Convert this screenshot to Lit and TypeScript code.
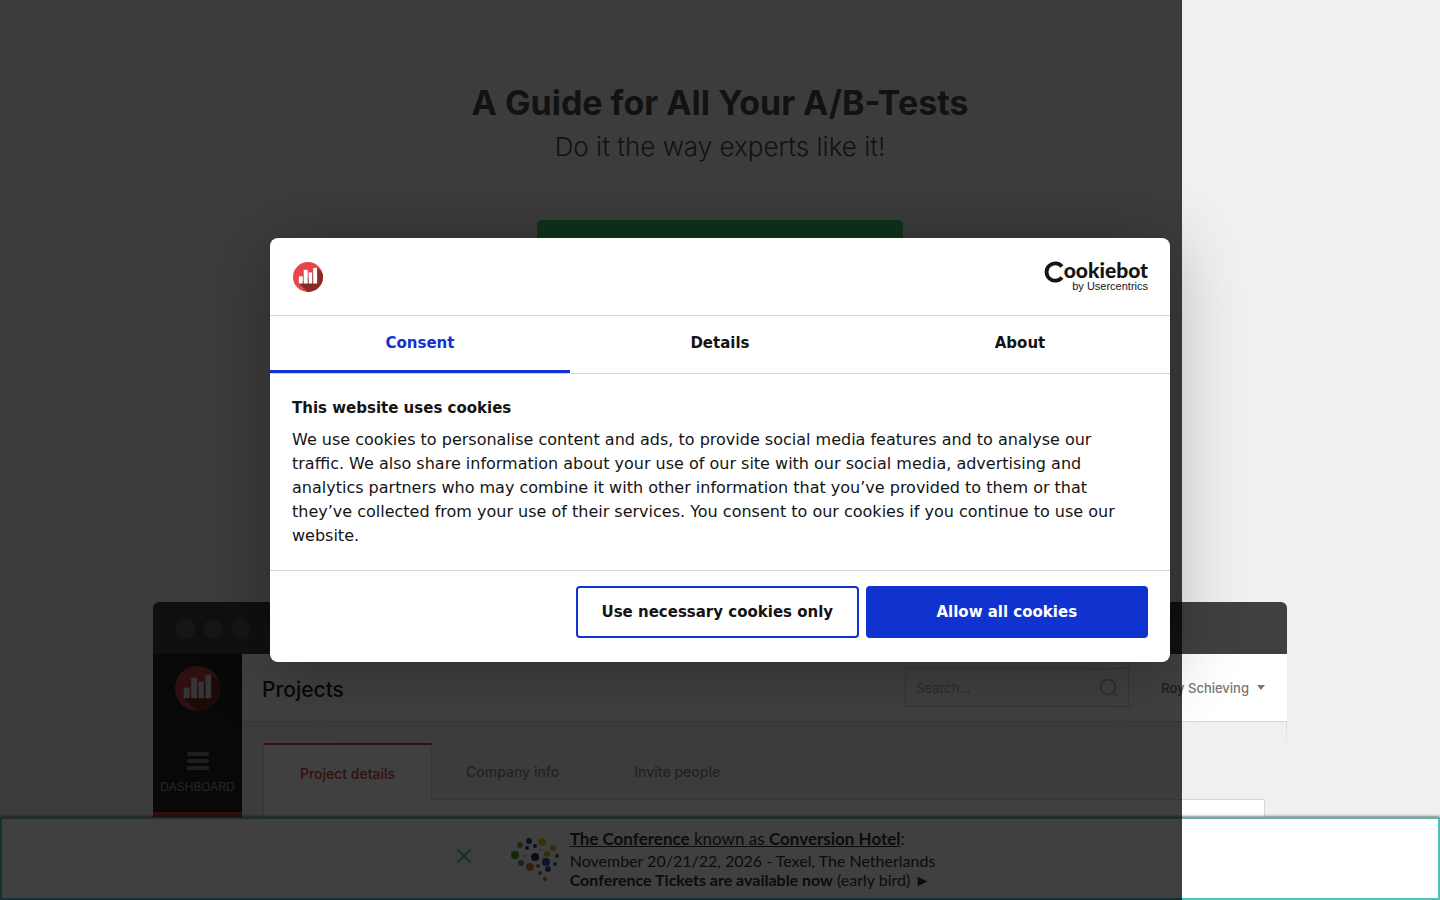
import { LitElement, html, css, svg } from "lit";
import { customElement, state } from "lit/decorators.js";

const barsLogo = (id: string) => html`
  <svg class="bars" viewBox="0 0 46 46" aria-hidden="true">
    <defs><clipPath id=${id}><circle cx="23" cy="23" r="23" /></clipPath></defs>
    <circle cx="23" cy="23" r="23" fill="#e8454a" />
    <path clip-path="url(#${id})" d="M9 33 L22 46 H46 V18 L38 9 L20 28 Z" fill="#8a2a24" />
    <g fill="#fff">
      <rect x="9" y="22" width="6" height="11" />
      <rect x="16.500" y="12" width="6" height="21" />
      <rect x="24" y="16" width="5.500" height="17" />
      <rect x="31" y="9" width="6" height="24" />
    </g>
  </svg>
`;

const DOTS: [number, number, number, string][] = [
  [5, 25, 4, "#4e9a2e"], [10, 15, 3, "#6ab04a"], [19, 11, 3, "#3c3c78"], [32, 12, 4, "#e6c21e"],
  [17, 18, 2, "#2f3270"], [25, 16, 2, "#2f3270"], [30, 20, 1, "#d8b060"], [43, 18, 3, "#dba53a"],
  [15, 26, 1, "#5a9a4a"], [25, 27, 4, "#26265c"], [37, 24, 3, "#dfb42a"], [47, 26, 2, "#4a3c80"],
  [11, 33, 3, "#5aa046"], [20, 37, 4, "#e0762a"], [28, 36, 2, "#6a6ab0"], [36, 32, 4, "#2f50a0"],
  [45, 34, 2, "#4c5aa0"], [38, 39, 3, "#34509a"], [30, 43, 2, "#c0653a"], [35, 49, 2, "#c8653a"],
];

@customElement("app-root")
export class AppRoot extends LitElement {
  @state() private tab = "Consent";

  static styles = css`
    :host {
      display: block;
      position: relative;
      height: 100vh;
      overflow: hidden;
      background: #f0f0f0;
      color: #333;
      font-family: Inter, sans-serif;
    }
    * { box-sizing: border-box; }
    h1, h2, p { margin: 0; }
    button { font: inherit; cursor: pointer; }
    a { color: inherit; }
    svg { display: block; }

    .hero { display: flex; flex-direction: column; align-items: center; padding-top: 82px; text-align: center; }
    .hero h1 { font-size: 34px; line-height: 42px; font-weight: 700; color: #4a4a4a; }
    .hero p { margin-top: 6px; font-size: 26px; line-height: 34px; font-weight: 300; color: #4a4a4a; }
    .cta {
      width: 366px; height: 64px; margin-top: 56px; border: 0; border-radius: 5px;
      background: #3cc864; color: #fff; font-size: 20px; font-weight: 700;
    }

    .app { width: 79%; max-width: 1134px; margin: 318px auto 0; }
    .chrome {
      display: flex; align-items: center; gap: 8px; height: 52px; padding: 2px 0 0 22px;
      background: #3f403f; border-radius: 6px 6px 0 0;
    }
    .chrome i { width: 20px; height: 20px; border-radius: 50%; background: #575757; }
    .window { display: flex; height: 400px; }
    .side {
      display: flex; flex-direction: column; align-items: center; width: 89px; height: 163px;
      padding-top: 12px; background: #232323; border-bottom: 5px solid #c83836;
      color: #959595; font-size: 12px; line-height: 16px;
    }
    .side .bars { width: 45px; height: 45px; opacity: .8; }
    .burger { display: grid; gap: 3px; width: 22px; margin: 41px 0 9px; }
    .burger i { height: 4px; border-radius: 1px; background: #777; }
    .work { flex: 1; }
    .top {
      display: flex; align-items: center; height: 68px; padding: 0 22px 0 20px;
      background: #fff; border-bottom: 1px solid #d8d8d8;
    }
    .top h2 { flex: 1; padding-top: 4px; font-size: 21px; line-height: 28px; font-weight: 500; color: #222; }
    .search {
      display: flex; align-items: center; width: 224px; height: 39px; padding: 0 10px;
      border: 1px solid #d4d4d4;
    }
    .search input {
      flex: 1; min-width: 0; padding: 0; border: 0; background: none; font: inherit; font-size: 13px;
    }
    .search input::placeholder { color: #b0b0b0; }
    .user {
      display: flex; align-items: center; gap: 8px; margin-left: 32px; padding: 0; border: 0;
      background: none; color: #777; font-size: 13px; font-weight: 500;
    }
    .tabs {
      display: flex; padding: 21px 22px 0 21px;
      background: linear-gradient(#d8d8d8, #f0f0f0) right top / 1px 26px no-repeat;
    }
    .tabs a {
      height: 57px; padding-right: 75px; border-bottom: 1px solid #d8d8d8;
      color: #888; font-size: 14px; line-height: 58px; font-weight: 500; text-decoration: none;
    }
    .tabs .on {
      width: 169px; padding: 0; border: solid #d8d8d8; border-width: 2px 1px 0;
      border-top-color: #e03c38; background: #fff; color: #d23c38; text-align: center;
    }
    .tabs .on + a { padding-left: 34px; }
    .tabs .rest { flex: 1; border-bottom: 1px solid #d8d8d8; }
    .panel { height: 120px; margin: 0 22px 0 21px; background: #fff; border: solid #d8d8d8; border-width: 0 1px; }

    .promo {
      position: absolute; left: 0; right: 0; bottom: 0; height: 83px;
      display: flex; align-items: center; justify-content: center;
      padding: 0 50px 2px 0; background: #fff; border: 2px solid #4bc2ba; border-top-color: #62b3af;
      box-shadow: 0 0 3px rgba(0, 0, 0, .8); font-family: Lato, sans-serif; font-size: 16px; line-height: 19px;
    }
    .close { padding: 0 0 4px; border: 0; background: none; margin-right: 37px; }
    .copy { margin-left: 10px; }
    .copy .lead { font-size: 17px; line-height: 25px; }

    .shade { position: absolute; top: 0; bottom: 0; left: 0; right: 258px; background: rgba(0, 0, 0, .75); }

    .dialog {
      position: absolute; top: 50%; left: 50%; transform: translate(-50%, -50%);
      width: 900px; max-width: 100%; background: #fff; border-radius: 8px; color: #141414;
      box-shadow: 0 8px 70px rgba(0, 0, 0, .3);
      font-family: "DejaVu Sans", sans-serif; font-size: 15px; line-height: 24px;
    }
    .head {
      display: flex; align-items: center; justify-content: space-between;
      height: 78px; padding: 0 22px; border-bottom: 1px solid #d6d6d6;
    }
    .head .bars { width: 32px; height: 30px; }
    .nav { display: flex; border-bottom: 1px solid #d6d6d6; }
    .nav button {
      flex: 1; height: 57px; padding: 0 0 3px; border: 0; background: none; color: inherit; font-weight: 700;
    }
    .nav button.active { padding-bottom: 0; border-bottom: 3px solid #1032cf; color: #1032cf; }
    .body { padding: 22px 22px; border-bottom: 1px solid #d6d6d6; }
    .body h2 { margin-bottom: 8px; font-size: 15px; line-height: 24px; }
    .body p { max-width: 840px; font-size: 16px; }
    .foot { display: flex; justify-content: flex-end; gap: 7px; padding: 15px 22px 24px; }
    .foot button {
      width: 33%; height: 52px; padding: 0; border: 2px solid #1032cf; border-radius: 4px;
      background: #fff; color: inherit; font-weight: 700;
    }
    .foot .primary { background: #1032cf; color: #fff; }
  `;

  render() {
    return html`
      <main class="hero">
        <h1>A Guide for All Your A/B-Tests</h1>
        <p>Do it the way experts like it!</p>
        <button class="cta" aria-label="Start"></button>
      </main>
      <section class="app">
        <div class="chrome"><i></i><i></i><i></i></div>
        <div class="window">
          <div class="side">
            ${barsLogo("side-clip")}
            <div class="burger"><i></i><i></i><i></i></div>
            DASHBOARD
          </div>
          <div class="work">
            <div class="top">
              <h2>Projects</h2>
              <label class="search">
                <input type="text" placeholder="Search..." aria-label="Search" />
                <svg width="20" height="20" viewBox="0 0 20 20" fill="none" stroke="#b0b0b0" stroke-width="1.500">
                  <circle cx="10" cy="9" r="7.500" /><path d="M15 14l4 4" />
                </svg>
              </label>
              <button class="user">Roy Schieving
                <svg width="8" height="5" viewBox="0 0 8 5"><path d="M0 0h8L4 5z" fill="#777" /></svg>
              </button>
            </div>
            <nav class="tabs">
              <a class="on" href="#details">Project details</a>
              <a href="#company">Company info</a>
              <a href="#people">Invite people</a>
              <span class="rest"></span>
            </nav>
            <div class="panel"></div>
          </div>
        </div>
      </section>

      <aside class="promo">
        <button class="close" aria-label="Close">
          <svg width="18" height="18" viewBox="0 0 18 18"><path d="M2 2l14 14M16 2L2 16" stroke="#4bc2ba" stroke-width="2" /></svg>
        </button>
        <svg width="50" height="56" viewBox="0 0 50 56" aria-hidden="true">
          ${DOTS.map(([x, y, r, c]) => svg`<circle cx=${x} cy=${y} r=${r} fill=${c} />`)}
        </svg>
        <div class="copy">
          <p class="lead"><a href="#conference"><b>The Conference</b> known as <b>Conversion Hotel</b></a>:</p>
          <p>November 20/21/22, 2026 - Texel, The Netherlands</p>
          <p><b>Conference Tickets are available now</b> (early bird) ►</p>
        </div>
      </aside>

      <div class="shade"></div>

      <div class="dialog" role="dialog" aria-modal="true" aria-labelledby="title">
        <div class="head">
          ${barsLogo("head-clip")}
          <svg width="104" height="44" viewBox="0 -6 104 44" fill="#141414">
            <path d="M18 5.500A8.700 8.700 0 1 0 18 16.500" fill="none" stroke="#141414" stroke-width="3.800" />
            <text x="104" y="17" font-family="Lato, sans-serif" font-size="21" font-weight="900" text-anchor="end">ookiebot</text>
            <text x="104" y="29" font-family="Liberation Sans, sans-serif" font-size="11" text-anchor="end">by Usercentrics</text>
          </svg>
        </div>
        <div class="nav" role="tablist">
          ${["Consent", "Details", "About"].map(
            (t) => html`<button role="tab" class=${t === this.tab ? "active" : ""}
              aria-selected=${t === this.tab} @click=${() => (this.tab = t)}>${t}</button>`
          )}
        </div>
        <div class="body">
          <h2 id="title">This website uses cookies</h2>
          <p>
            We use cookies to personalise content and ads, to provide social media features and to analyse our
            traffic. We also share information about your use of our site with our social media, advertising and
            analytics partners who may combine it with other information that you’ve provided to them or that
            they’ve collected from your use of their services. You consent to our cookies if you continue to use our
            website.
          </p>
        </div>
        <div class="foot">
          <button>Use necessary cookies only</button>
          <button class="primary">Allow all cookies</button>
        </div>
      </div>
    `;
  }
}
